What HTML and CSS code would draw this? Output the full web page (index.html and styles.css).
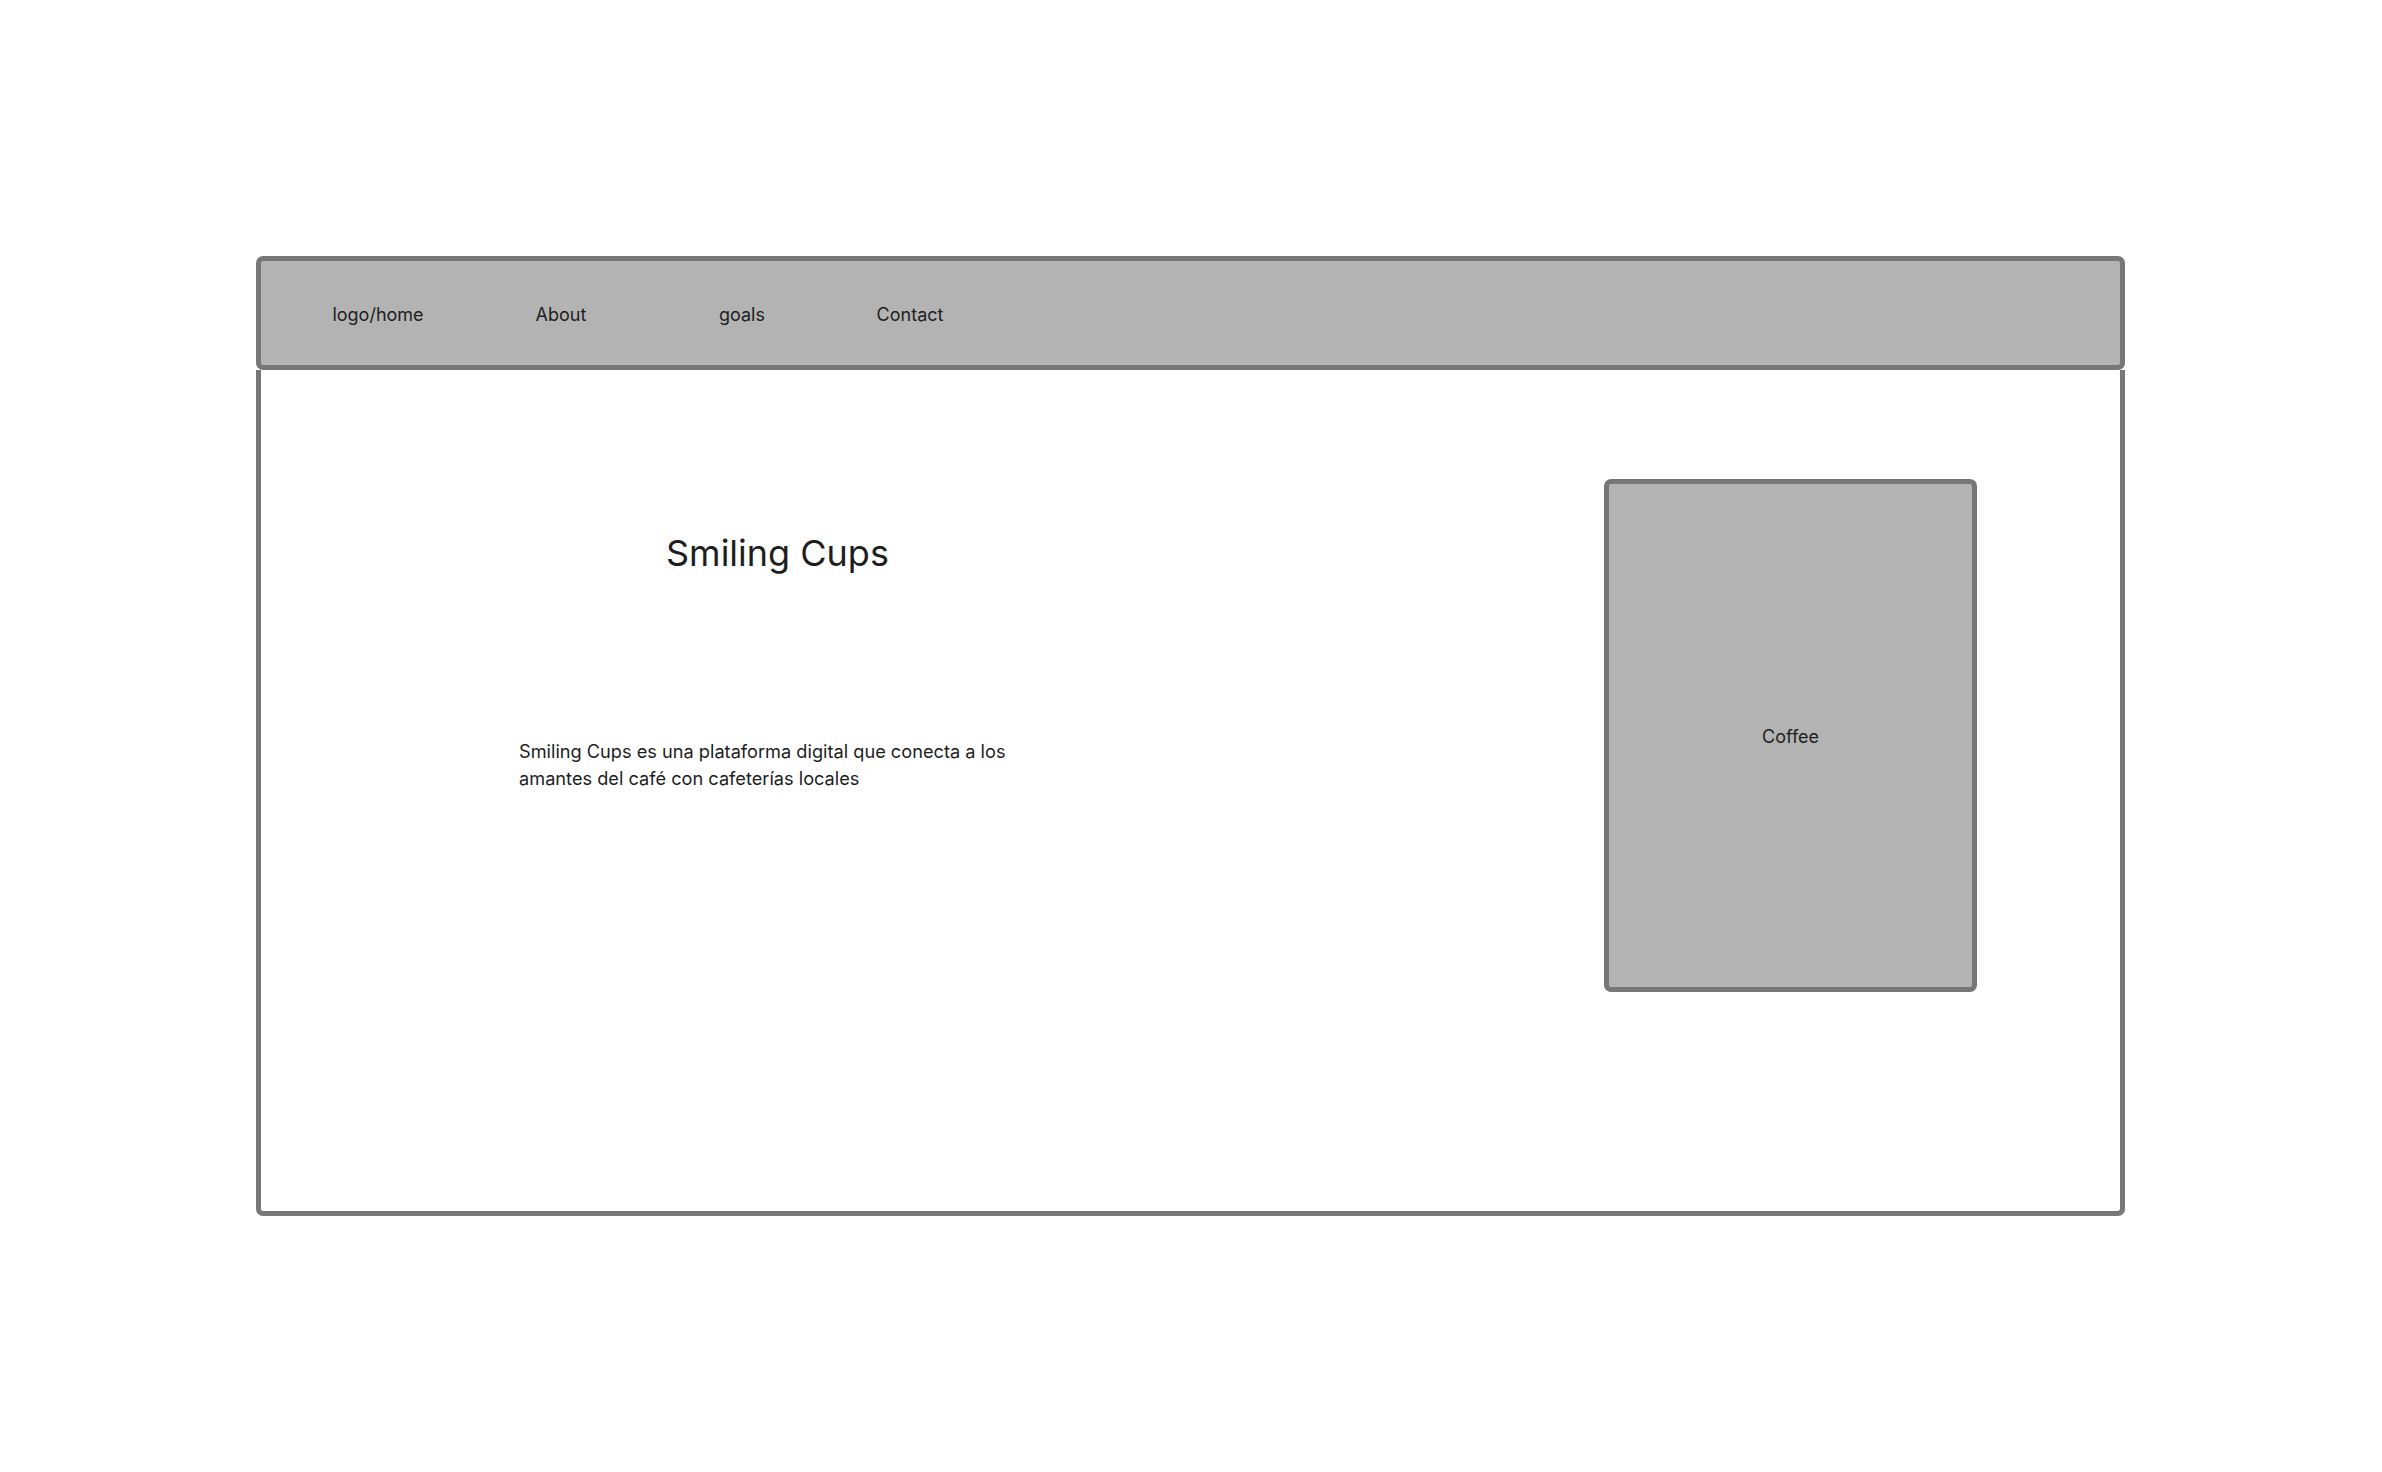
FILE: index.html
```html
<!DOCTYPE html>
<html lang="es">
<head>
<meta charset="utf-8">
<title>Smiling Cups</title>
<link rel="stylesheet" href="styles.css">
</head>
<body>
<div class="frame">
  <nav class="nav">
    <span class="nav-item nav-logo">logo/home</span>
    <span class="nav-item nav-about">About</span>
    <span class="nav-item nav-goals">goals</span>
    <span class="nav-item nav-contact">Contact</span>
  </nav>
  <main class="content">
    <section class="intro">
      <h1 class="title">Smiling Cups</h1>
      <p class="desc">Smiling Cups es una plataforma digital que conecta a los amantes del café con cafeterías locales</p>
    </section>
    <div class="coffee">Coffee</div>
  </main>
</div>
</body>
</html>
```

FILE: styles.css
```css
html, body {
  margin: 0;
  padding: 0;
  background: #ffffff;
}
body {
  font-family: Inter, "Noto Sans", "Liberation Sans", sans-serif;
  color: #1e1e1e;
}
.frame {
  margin-left: 256px;
  margin-top: 256px;
  width: 1869px;
  display: flex;
  flex-direction: column;
}
.nav {
  box-sizing: border-box;
  height: 114px;
  background: #b3b3b3;
  border: 5px solid #777777;
  border-radius: 7px;
  display: flex;
  align-items: center;
  padding-left: 26px;
  padding-top: 3px;
  font-size: 18px;
  line-height: 22px;
}
.nav-item {
  text-align: center;
}
.nav-logo { width: 182px; }
.nav-about { width: 184px; }
.nav-goals { width: 178px; }
.nav-contact { width: 158px; }
.content {
  box-sizing: border-box;
  height: 846px;
  border: 5px solid #777777;
  border-top: none;
  border-radius: 0 0 7px 7px;
  display: flex;
  justify-content: space-between;
  align-items: flex-start;
}
.intro {
  padding-left: 258px;
  padding-top: 161px;
}
.title {
  margin: 0 0 0 147px;
  font-size: 36px;
  line-height: 44px;
  font-weight: 400;
}
.desc {
  margin: 163px 0 0 0;
  width: 505px;
  font-size: 18.2px;
  line-height: 27px;
}
.coffee {
  box-sizing: border-box;
  margin-top: 109px;
  margin-right: 143px;
  width: 373px;
  height: 513px;
  background: #b3b3b3;
  border: 5px solid #777777;
  border-radius: 7px;
  display: flex;
  align-items: center;
  justify-content: center;
  padding-top: 2px;
  font-size: 18px;
}
```
